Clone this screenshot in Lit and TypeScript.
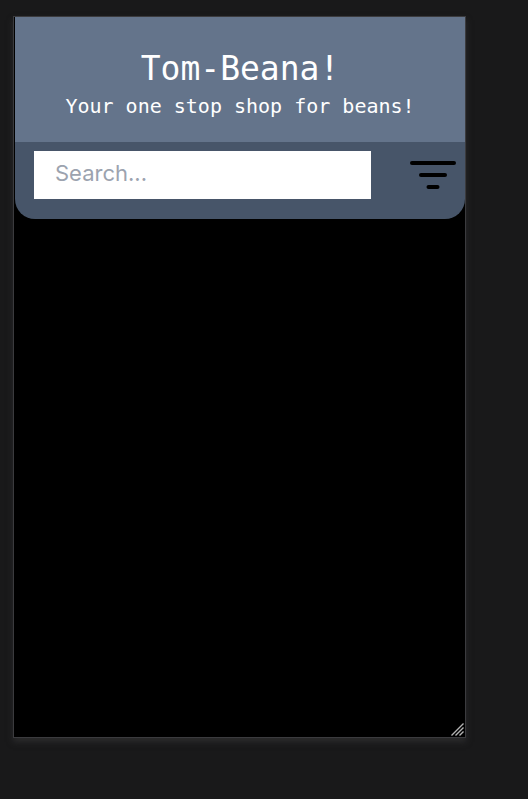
import { LitElement, html, css } from "lit";
import { customElement } from "lit/decorators.js";

@customElement("app-root")
export class AppRoot extends LitElement {
  static styles = css`
    :host {
      display: flex;
      box-sizing: border-box;
      min-height: 100vh;
      padding: 16px 62px 61px 13px;
      background: #19191a;
    }
    * {
      box-sizing: border-box;
    }
    .frame {
      position: relative;
      flex: 1;
      min-width: 0;
      padding-left: 1px;
      border: 1px solid #3b3b3e;
      background: #000;
      box-shadow: 0 4px 6px #2b2b2c;
    }
    .brand {
      padding: 32px 20px 19px;
      background: #64748b;
      color: #fff;
      font-family: Consolas, "DejaVu Sans Mono", monospace;
      text-align: center;
    }
    h1,
    p {
      margin: 0;
      font-weight: 400;
    }
    h1 {
      font-size: 33px;
      line-height: 40px;
    }
    p {
      font-size: 20px;
      line-height: 34px;
    }
    .toolbar {
      display: flex;
      align-items: center;
      gap: 39px;
      padding: 9px 9px 20px 19px;
      border-radius: 0 0 20px 20px;
      background: #475569;
    }
    input {
      flex: 1;
      min-width: 0;
      height: 48px;
      padding: 0 21px 4px;
      border: 0;
      border-radius: 0;
      background: #fff;
      color: #1f2937;
      font-family: Inter, sans-serif;
      font-size: 22px;
    }
    input::placeholder {
      color: #9ca3af;
      opacity: 1;
    }
    button {
      display: flex;
      padding: 0;
      border: 0;
      background: none;
      color: #000;
    }
    .grip {
      position: absolute;
      right: 0;
      bottom: 0;
    }
  `;

  render() {
    return html`
      <main class="frame">
        <header class="brand">
          <h1>Tom-Beana!</h1>
          <p>Your one stop shop for beans!</p>
        </header>
        <form class="toolbar" role="search">
          <input type="text" placeholder="Search..." aria-label="Search" />
          <button type="button" aria-label="Filter">
            <svg width="46" height="48" viewBox="0 0 46 48" fill="currentColor">
              <rect x="0" y="10" width="46" height="4" rx="2" />
              <rect x="9" y="22" width="28" height="4" rx="2" />
              <rect x="16.5" y="34" width="13" height="4" rx="2" />
            </svg>
          </button>
        </form>
        <svg class="grip" width="15" height="15" viewBox="0 0 15 15" fill="none" stroke="#b4b4b4" stroke-width="1.4" aria-hidden="true">
          <path d="M1.5 13.5 13.5 1.5M5.5 13.5 13.5 5.5M9.5 13.5 13.5 9.5" />
        </svg>
      </main>
    `;
  }
}
